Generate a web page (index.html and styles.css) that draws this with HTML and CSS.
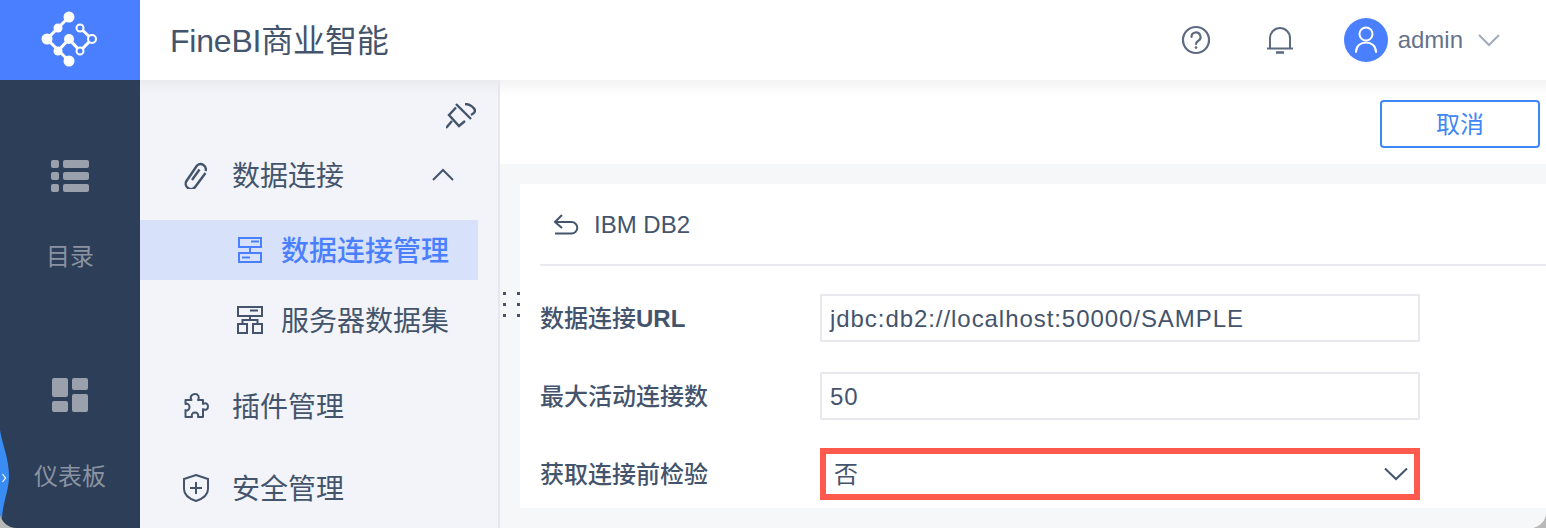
FILE: index.html
```html
<!DOCTYPE html>
<html>
<head>
    <title>FineBI</title>
    <link rel="stylesheet" href="styles.css">
</head>
<body>
<div class="app">
    <div class="rail">
        <div class="logo">
            <svg width="140" height="80" viewBox="0 0 140 80">
                <g stroke="#fff" stroke-width="3" fill="none">
                    <path d="M69 17L47 39L69 61"/>
                    <path d="M58 51L69 39L80 51L92 39L80 28"/>
                </g>
                <g fill="#fff">
                    <circle cx="69" cy="17" r="5.5"/><circle cx="58" cy="28" r="4.5"/>
                    <circle cx="47" cy="39" r="5.5"/><circle cx="58" cy="51" r="4.5"/>
                    <circle cx="69" cy="61" r="5.5"/><circle cx="69" cy="39" r="5"/>
                </g>
                <g fill="#4a80ff" stroke="#fff" stroke-width="2">
                    <circle cx="80" cy="28" r="3.5"/><circle cx="92" cy="39" r="4"/><circle cx="80" cy="51" r="3.5"/>
                </g>
            </svg>
        </div>
        <div class="rail-nav">
            <div class="rail-item">
                <svg class="rail-icon" width="38" height="34" viewBox="0 0 38 34" fill="#9aa1ad">
                    <rect x="0" y="1" width="8" height="8" rx="2"/><rect x="12" y="1" width="26" height="8" rx="2"/>
                    <rect x="0" y="13" width="8" height="8" rx="2"/><rect x="12" y="13" width="26" height="8" rx="2"/>
                    <rect x="0" y="25" width="8" height="8" rx="2"/><rect x="12" y="25" width="26" height="8" rx="2"/>
                </svg>
                <div class="rail-label">目录</div>
            </div>
            <div class="rail-item">
                <svg class="rail-icon" width="36" height="34" viewBox="0 0 36 34" fill="#9aa1ad">
                    <rect x="0" y="0" width="16" height="19" rx="2"/><rect x="20" y="0" width="16" height="12" rx="2"/>
                    <rect x="0" y="23" width="16" height="11" rx="2"/><rect x="20" y="16" width="16" height="18" rx="2"/>
                </svg>
                <div class="rail-label rail-label-low">仪表板</div>
            </div>
        </div>
        <svg class="bubble" width="10" height="92" viewBox="0 0 10 92">
            <path d="M0 0C2 14 9 28 9 46C9 62 2 72 2 92H0Z" fill="#3a8cf5"/>
            <path d="M2.5 44L5.5 48L2.5 52" fill="none" stroke="#fff" stroke-width="1.2"/>
        </svg>
    </div>

    <div class="right">
        <div class="header">
            <div class="brand">FineBI商业智能</div>
            <div class="header-tools">
                <svg width="30" height="30" viewBox="0 0 30 30" fill="none" stroke="#5d6b80" stroke-width="2.2">
                    <circle cx="15" cy="15" r="13"/>
                    <path d="M10.5 12a4.5 4.5 0 1 1 6.8 3.8c-1.4.9-2.3 1.6-2.3 3.2" stroke-linecap="round"/>
                    <circle cx="15" cy="22.6" r="1.3" fill="#5d6b80" stroke="none"/>
                </svg>
                <svg class="bell" width="28" height="30" viewBox="0 0 28 30" fill="none" stroke="#5d6b80" stroke-width="2">
                    <path d="M1 23.500H27M4 23.500V13a10 10 0 0 1 20 0V23.500"/>
                    <path d="M10 27.500H18" stroke-width="2.600"/>
                </svg>
                <div class="user">
                    <div class="avatar">
                        <svg width="44" height="44" viewBox="0 0 44 44" fill="none" stroke="#fff" stroke-width="2">
                            <circle cx="22" cy="16" r="6.500"/>
                            <path d="M12 34c0-6 4.500-9.500 10-9.500S32 28 32 34" stroke-linecap="round"/>
                        </svg>
                    </div>
                    <span class="user-name">admin</span>
                    <svg width="22" height="14" viewBox="0 0 22 14" fill="none" stroke="#a3abb7" stroke-width="2"><path d="M1 2L11 12L21 2"/></svg>
                </div>
            </div>
        </div>

        <div class="body">
            <div class="sidebar">
                <div class="pin-row">
                    <svg width="30" height="28" viewBox="0 0 30 28" fill="none" stroke="#44546c" stroke-width="2.400">
                        <path d="M10 1L25 16"/>
                        <path d="M19 1C24 1 29 5 29 8C29 10 27 11 25 12"/>
                        <path d="M10 4.500L3 12L13 23L19 18"/>
                        <path d="M6 18L0 25"/>
                    </svg>
                </div>
                <div class="menu-item parent">
                    <svg class="menu-icon" width="26" height="28" viewBox="2 0 26 28" fill="none" stroke="#44546c" stroke-width="2.400">
                        <path d="M18.500 8.500L11 19"/>
                        <path d="M24.500 12L14.500 25.500A5.200 5.200 0 0 1 5.500 20L16 4.500A5.200 5.200 0 0 1 24.500 10"/>
                    </svg>
                    <span>数据连接</span>
                    <svg class="menu-arrow" width="24" height="14" viewBox="0 0 24 14" fill="none" stroke="#44546c" stroke-width="2"><path d="M2 12L12 2L22 12"/></svg>
                </div>
                <div class="menu-item sub active">
                    <svg class="menu-icon" width="26" height="28" viewBox="0 0 26 28" fill="none" stroke="#4a80ff" stroke-width="2">
                        <rect x="2" y="2" width="22" height="9"/>
                        <rect x="2" y="17" width="22" height="9"/>
                        <path d="M13 11V17"/>
                        <path d="M14 5.500H22M5 21.500H13"/>
                    </svg>
                    <span>数据连接管理</span>
                </div>
                <div class="menu-item sub">
                    <svg class="menu-icon" width="26" height="28" viewBox="0 0 26 28" fill="none" stroke="#44546c" stroke-width="2">
                        <rect x="1" y="1" width="24" height="9"/>
                        <path d="M13 10V14M5.500 19V14H20.500V19"/>
                        <rect x="1" y="18" width="9" height="9"/>
                        <rect x="16" y="18" width="9" height="9"/>
                        <path d="M13 4.500H21"/>
                    </svg>
                    <span>服务器数据集</span>
                </div>
                <div class="menu-item parent plugin">
                    <svg class="menu-icon" width="26" height="26" viewBox="0 0 26 26" fill="none" stroke="#44546c" stroke-width="2" stroke-linejoin="round">
                        <path d="M8.500 7C6 3 10 1 12 1C15 1 17 4 15 7H20V11C23 9 25 11 25 13.500C25 16 23 18 20 16V24H15C16 21 14 19.500 12 19.500C10 19.500 8 21 9 24H2.500V17C5 18.500 6.500 16 6.500 14C6.500 12 5 10 2.500 11V7Z"/>
                    </svg>
                    <span>插件管理</span>
                </div>
                <div class="menu-item parent safe">
                    <svg class="menu-icon" width="26" height="28" viewBox="0 0 26 28" fill="none" stroke="#44546c" stroke-width="2">
                        <path d="M13 1L25 5V15C25 21 19 25 13 27C7 25 1 21 1 15V5Z"/>
                        <path d="M13 8V20M7 14H19"/>
                    </svg>
                    <span>安全管理</span>
                </div>
            </div>

            <div class="main">
                <div class="toolbar"><button class="btn-cancel">取消</button></div>
                <div class="card">
                    <div class="card-head">
                        <svg width="26" height="24" viewBox="0 0 26 24" fill="none" stroke="#44546c" stroke-width="2">
                            <path d="M9 3L2 10L9 16M2 10H18.500a5.800 5.800 0 0 1 0 11.600H2"/>
                        </svg>
                        <span>IBM DB2</span>
                    </div>
                    <div class="form">
                        <div class="form-row">
                            <label class="form-label">数据连接<b>URL</b></label>
                            <div class="field">jdbc:db2://localhost:50000/SAMPLE</div>
                        </div>
                        <div class="form-row">
                            <label class="form-label">最大活动连接数</label>
                            <div class="field">50</div>
                        </div>
                        <div class="form-row">
                            <label class="form-label">获取连接前检验</label>
                            <div class="field select">
                                <span>否</span>
                                <svg width="24" height="14" viewBox="0 0 24 14" fill="none" stroke="#44546c" stroke-width="2"><path d="M1 1.500L12 12L23 1.500"/></svg>
                            </div>
                        </div>
                    </div>
                </div>
            </div>
            <div class="drag-dots"><i></i><i></i><i></i><i></i><i></i><i></i></div>
        </div>
    </div>
</div>
</body>
</html>
```

FILE: styles.css
```css
html { background: #b9b9b9; }
body { margin: 0; font-family: "Liberation Sans", "Noto Sans CJK SC", sans-serif; color: #44546c; }
.app { display: flex; width: 1546px; height: 528px; overflow: hidden; background: #fff; border-radius: 0 0 16px 16px; }

.rail { position: relative; width: 140px; flex: none; background: #2c3e58; }
.logo { height: 80px; background: #4a80ff; }
.logo svg { display: block; }
.rail-nav { padding-top: 79px; }
.rail-item { height: 219px; text-align: center; }
.rail-icon { display: block; height: 34px; margin: 0 auto 48px; }
.rail-label { font-size: 24px; line-height: 32px; color: #8a93a1; }
.rail-label-low { margin-top: 49px; }
.rail-item:last-child .rail-icon { margin-bottom: 0; }
.bubble { position: absolute; left: 0; top: 430px; }

.right { flex: 1; display: flex; flex-direction: column; min-width: 0; }
.header { height: 80px; flex: none; display: flex; align-items: center; justify-content: space-between; padding: 0 46px 0 30px; background: #fff; }
.brand { font-size: 32px; letter-spacing: -0.2px; padding-bottom: 5px; color: #44546c; }
.header-tools { display: flex; align-items: center; }
.bell { margin-left: 55px; }
.user { display: flex; align-items: center; margin-left: 50px; }
.avatar { width: 44px; height: 44px; border-radius: 50%; background: #4a80ff; }
.avatar svg { display: block; }
.user-name { font-size: 24px; color: #66738a; margin: 0 15px 0 10px; }

.body { position: relative; flex: 1; display: flex; min-height: 0; }

.sidebar { width: 360px; flex: none; padding-right: 20px; box-sizing: border-box; background: linear-gradient(#e9ebef, #f2f4f9 14px); border-right: 2px solid #e6e7ed; overflow: hidden; }
.pin-row { height: 65px; display: flex; justify-content: flex-end; align-items: flex-start; padding: 23px 2px 0 0; box-sizing: border-box; }
.menu-item { display: flex; align-items: center; height: 60px; font-size: 28px; color: #44546c; }
.menu-item span { padding-bottom: 3px; }
.menu-icon { flex: none; }
.parent { padding-left: 43px; }
.parent span { margin-left: 23px; }
.sub { padding-left: 97px; margin-top: 10px; }
.sub span { margin-left: 18px; }
.parent + .sub { margin-top: 15px; }
.active { background: #d7e2fa; color: #4a80ff; font-weight: 500; }
.menu-arrow { margin-left: 87px; }
.plugin { margin-top: 26px; }
.safe { margin-top: 22px; }

.main { flex: 1; min-width: 0; background: #f6f7f9; }
.toolbar { height: 84px; box-sizing: border-box; display: flex; justify-content: flex-end; align-items: center; padding: 4px 6px 0 0; background: linear-gradient(#f3f3f4, #fff 16px); }
.btn-cancel { width: 160px; height: 48px; padding: 0 0 4px; font-family: inherit; font-size: 24px; color: #3f87f5; background: #fff; border: 2px solid #3f87f5; border-radius: 4px; }
.card { margin: 20px 0 0 20px; height: 324px; background: #fff; padding-left: 20px; }
.card-head { display: flex; align-items: center; height: 80px; border-bottom: 2px solid #e8e9ef; padding-left: 13px; font-size: 24px; }
.card-head span { margin-left: 15px; padding-top: 2px; }
.form { padding-top: 28px; }
.form-row { display: flex; align-items: center; margin-bottom: 30px; }
.form-label { width: 280px; flex: none; padding-bottom: 4px; font-size: 24px; font-weight: 500; color: #44546c; }
.field { width: 600px; height: 48px; box-sizing: border-box; border: 2px solid #e8e9ef; padding-left: 8px; font-size: 24px; line-height: 46px; letter-spacing: 0.94px; color: #44546c; }
.select { display: flex; align-items: center; justify-content: space-between; height: 52px; margin: -2px 0; border: 6px solid #ff5a4d; padding: 0 6px 0 8px; line-height: 42px; }
.select span { padding-top: 2px; }

.drag-dots { position: absolute; left: 363px; top: 212px; display: grid; grid-template-columns: 3px 3px; gap: 8px 11px; }
.drag-dots i { width: 3px; height: 3px; background: #44546c; }
```
